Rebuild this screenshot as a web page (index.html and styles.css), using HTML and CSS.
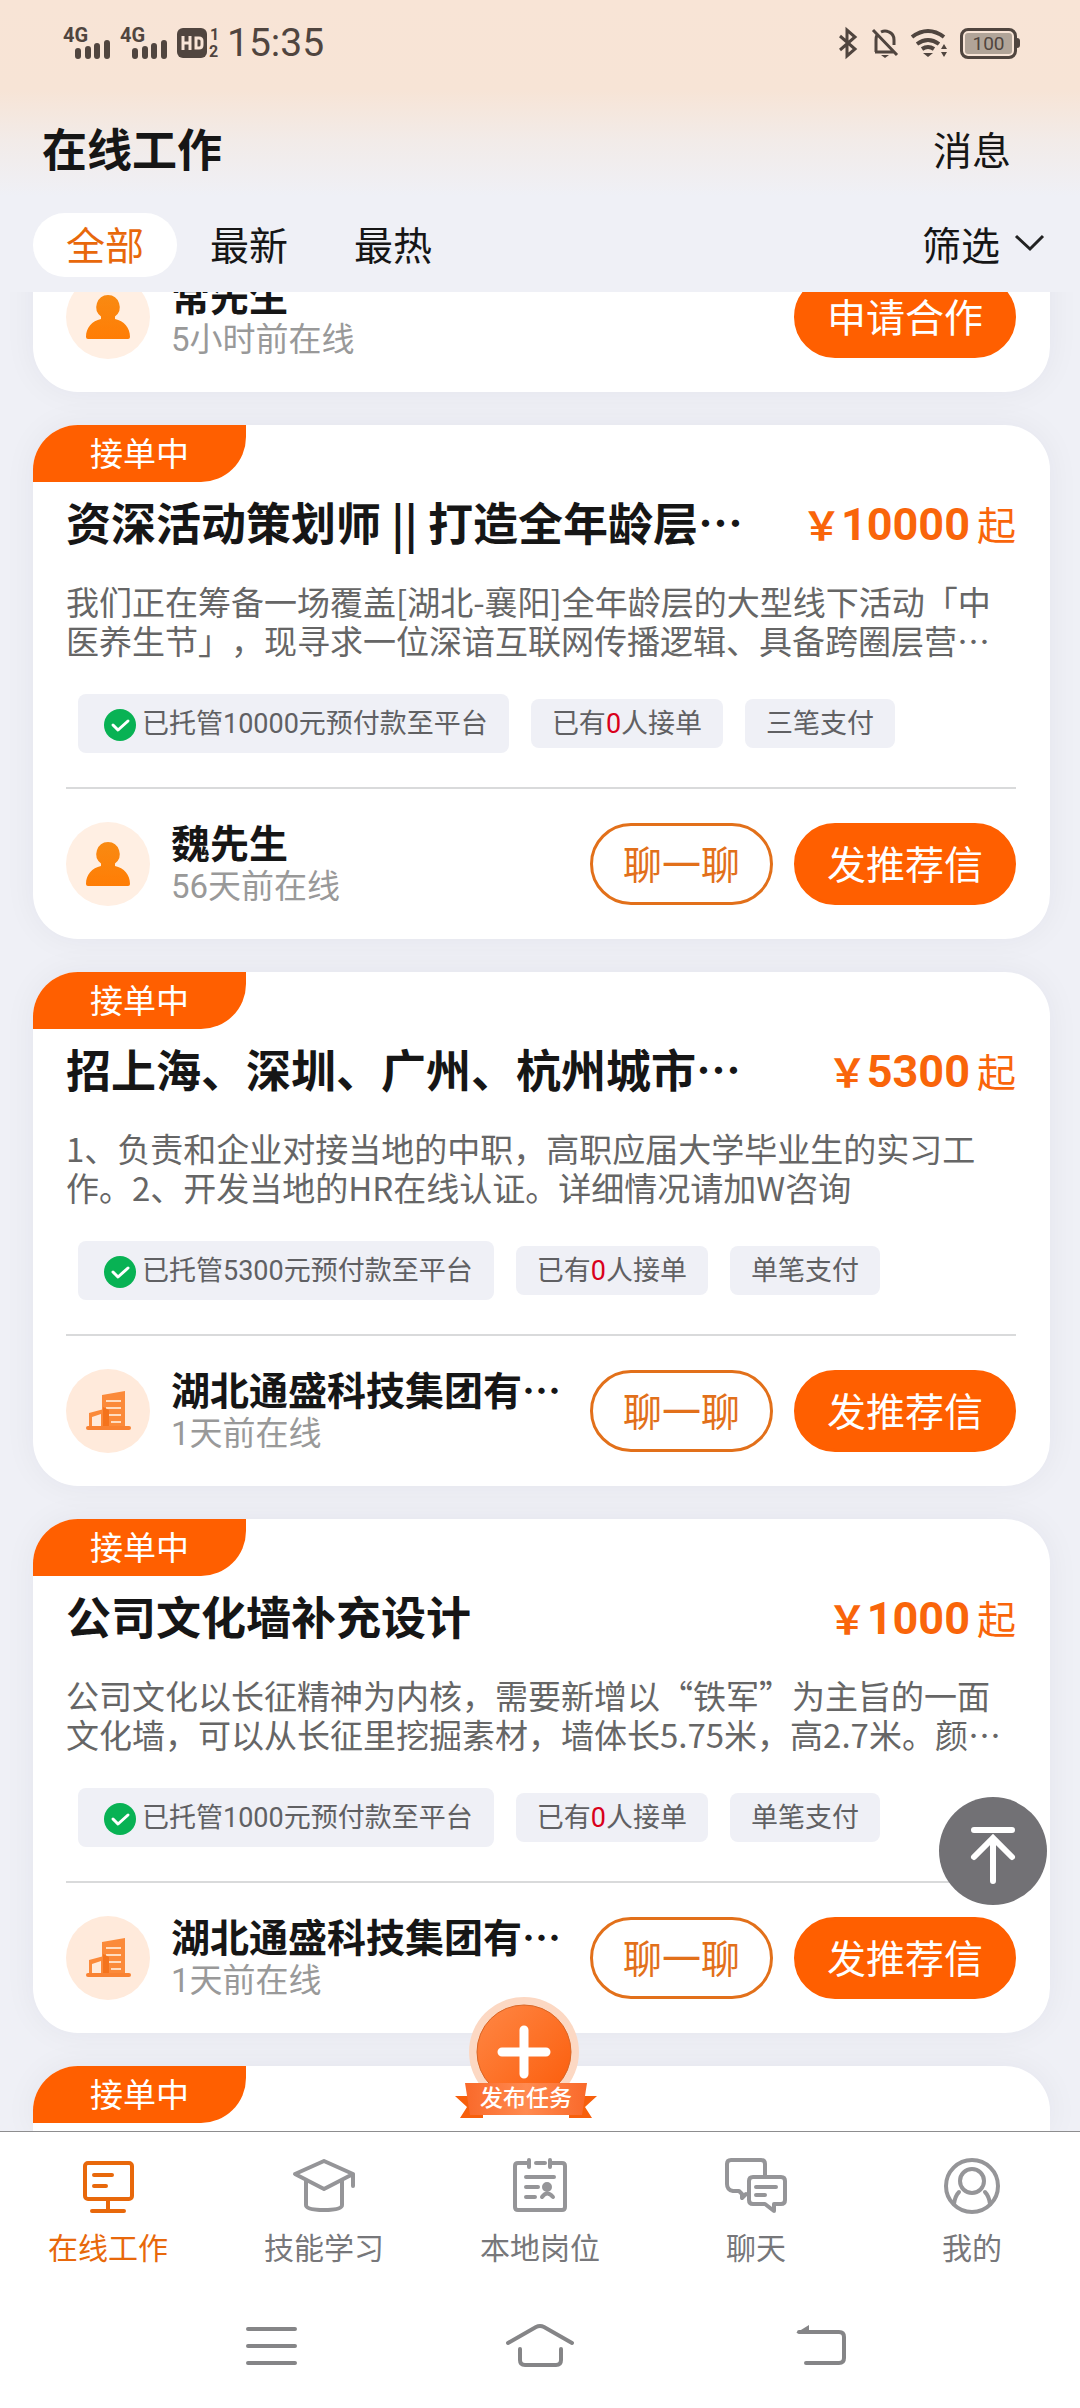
FILE: index.html
```html
<!DOCTYPE html>
<html lang="zh-CN">
<head>
<meta charset="utf-8">
<meta name="viewport" content="width=device-width, initial-scale=1">
<title>在线工作</title>
<link rel="stylesheet" href="styles.css">
</head>
<body>
<svg class="sprite" aria-hidden="true">
  <defs>
    <linearGradient id="person-fill" x1="0" y1="0" x2="0" y2="1">
      <stop offset="0" stop-color="#f98a12"/>
      <stop offset="1" stop-color="#ff7d05"/>
    </linearGradient>
  </defs>
  <symbol id="person" viewBox="0 0 84 84">
    <circle cx="42" cy="42" r="42" fill="#ffefe3"/>
    <path d="M42 20a12 12 0 0 1 7 21.500v2.500c9 2 15 8.500 15 18q0 2-2 2H22q-2 0-2-2c0-9.500 6-16 15-18v-2.500A12 12 0 0 1 42 20z" fill="url(#person-fill)"/>
  </symbol>
  <symbol id="building" viewBox="0 0 84 84">
    <circle cx="42" cy="42" r="42" fill="#ffeadb"/>
    <path d="M36 26l23-4v38H36z" fill="#fb8a3a"/>
    <path d="M40 32h15M40 39h15M43 46h12M45 53h10" stroke="#ffdcc0" stroke-width="2"/>
    <path d="M23 44l15-4v20h-3V45l-9 3v12h-3z" fill="#fb8a3a"/>
    <path d="M37 38l6 3v19h-6z" fill="#f4731c"/>
    <path d="M22 59h41" stroke="#f98232" stroke-width="4" stroke-linecap="round"/>
  </symbol>
  <symbol id="check" viewBox="0 0 32 32">
    <circle cx="16" cy="16" r="16" fill="#08b254"/>
    <path d="M9 16l5 5 10-9" fill="none" stroke="#fff" stroke-width="3" stroke-linecap="round" stroke-linejoin="round"/>
  </symbol>
</svg>

<div class="app">
  <div class="top">
    <div class="status">
      <svg class="signal" viewBox="0 0 48 32" aria-hidden="true"><text x="0" y="15">4G</text><path d="M15 24v5M25 22v7M34 19v10M44 16v13"/></svg>
      <svg class="signal" viewBox="0 0 48 32" aria-hidden="true"><text x="0" y="15">4G</text><path d="M15 24v5M25 22v7M34 19v10M44 16v13"/></svg>
      <svg class="hd" viewBox="0 0 46 32" aria-hidden="true"><rect y="1" width="30" height="30" rx="6"/><path d="M6 9v14M13 9v14M6 16h7M19 11v10h3q3 0 3-3v-4q0-3-3-3z"/><text x="33" y="13">1</text><text x="32" y="30">2</text></svg>
      <time class="clock">15:35</time>
      <span class="spacer"></span>
      <svg class="bt" viewBox="0 0 20 30" aria-hidden="true"><path d="M2 8l15 13-8 7V2l8 7L2 22"/></svg>
      <svg class="mute" viewBox="0 0 28 30" aria-hidden="true"><path d="M2 2l24 25M4 24h19M5 24V12q0-3 1-5M10 4q4-2 8 0 5 2 5 8v5"/><path d="M10 27h8l-4 3z" class="solid"/></svg>
      <svg class="wifi" viewBox="0 0 40 30" aria-hidden="true"><path d="M2 9q16-12 32 0M7 16q11-8 22 0M12 21q6-4 12 0"/><path d="M13 25h10l-5 4zM31 21l3-5 3 5zM31 24l3 5 3-5z" class="solid"/></svg>
      <span class="battery">100</span>
      <span class="battery-tip"></span>
    </div>
    <header class="bar">
      <h1 class="page-title">在线工作</h1>
      <a class="messages" href="#messages">消息</a>
    </header>
    <div class="filters">
      <button class="tab tab-on" type="button">全部</button>
      <button class="tab" type="button">最新</button>
      <button class="tab" type="button">最热</button>
      <span class="spacer"></span>
      <button class="filter" type="button">筛选<svg class="chevron" viewBox="0 0 33 18" aria-hidden="true"><path d="M2 2l14 13L29 2"/></svg></button>
    </div>
  </div>

  <main class="list">
    <article class="card card-scrolled">
      <div class="owner">
        <svg class="avatar" aria-hidden="true"><use href="#person"/></svg>
        <div class="who"><span class="name">常先生</span><span class="seen">5小时前在线</span></div>
        <button class="btn btn-solid" type="button">申请合作</button>
      </div>
    </article>

    <article class="card">
      <span class="badge">接单中</span>
      <div class="head"><h2 class="title">资深活动策划师 || 打造全年龄层…</h2><p class="price"><span class="yen">&#65509;</span>10000<span class="from">起</span></p></div>
      <p class="desc">我们正在筹备一场覆盖[湖北-襄阳]全年龄层的大型线下活动「中医养生节」，现寻求一位深谙互联网传播逻辑、具备跨圈层营…</p>
      <div class="tags">
        <span class="tag tag-paid"><svg class="check" aria-hidden="true"><use href="#check"/></svg>已托管10000元预付款至平台</span>
        <span class="tag">已有<em>0</em>人接单</span>
        <span class="tag">三笔支付</span>
      </div>
      <div class="owner">
        <svg class="avatar" aria-hidden="true"><use href="#person"/></svg>
        <div class="who"><span class="name">魏先生</span><span class="seen">56天前在线</span></div>
        <button class="btn" type="button">聊一聊</button>
        <button class="btn btn-solid" type="button">发推荐信</button>
      </div>
    </article>

    <article class="card">
      <span class="badge">接单中</span>
      <div class="head"><h2 class="title">招上海、深圳、广州、杭州城市…</h2><p class="price"><span class="yen">&#65509;</span>5300<span class="from">起</span></p></div>
      <p class="desc">1、负责和企业对接当地的中职，高职应届大学毕业生的实习工作。2、开发当地的HR在线认证。详细情况请加W咨询</p>
      <div class="tags">
        <span class="tag tag-paid"><svg class="check" aria-hidden="true"><use href="#check"/></svg>已托管5300元预付款至平台</span>
        <span class="tag">已有<em>0</em>人接单</span>
        <span class="tag">单笔支付</span>
      </div>
      <div class="owner">
        <svg class="avatar" aria-hidden="true"><use href="#building"/></svg>
        <div class="who"><span class="name">湖北通盛科技集团有…</span><span class="seen">1天前在线</span></div>
        <button class="btn" type="button">聊一聊</button>
        <button class="btn btn-solid" type="button">发推荐信</button>
      </div>
    </article>

    <article class="card">
      <span class="badge">接单中</span>
      <div class="head"><h2 class="title">公司文化墙补充设计</h2><p class="price"><span class="yen">&#65509;</span>1000<span class="from">起</span></p></div>
      <p class="desc">公司文化以长征精神为内核，需要新增以“铁军”为主旨的一面文化墙，可以从长征里挖掘素材，墙体长5.75米，高2.7米。颜…</p>
      <div class="tags">
        <span class="tag tag-paid"><svg class="check" aria-hidden="true"><use href="#check"/></svg>已托管1000元预付款至平台</span>
        <span class="tag">已有<em>0</em>人接单</span>
        <span class="tag">单笔支付</span>
      </div>
      <div class="owner">
        <svg class="avatar" aria-hidden="true"><use href="#building"/></svg>
        <div class="who"><span class="name">湖北通盛科技集团有…</span><span class="seen">1天前在线</span></div>
        <button class="btn" type="button">聊一聊</button>
        <button class="btn btn-solid" type="button">发推荐信</button>
      </div>
    </article>

    <article class="card card-next">
      <span class="badge">接单中</span>
    </article>
  </main>

  <footer class="bottom">
    <button class="to-top" type="button" aria-label="返回顶部">
      <svg viewBox="0 0 108 108" aria-hidden="true"><path d="M35 33h38M54 84V42M35 60l19-19 19 19"/></svg>
    </button>
    <button class="publish" type="button">
      <svg viewBox="0 0 142 124" aria-hidden="true">
        <defs>
          <linearGradient id="disc" x1="0" y1="0" x2="1" y2="1"><stop offset="0" stop-color="#ff8745"/><stop offset="1" stop-color="#fb5c0a"/></linearGradient>
          <linearGradient id="band" x1="0" y1="0" x2="1" y2="0"><stop offset="0" stop-color="#f9692a"/><stop offset=".5" stop-color="#ff8a50"/><stop offset="1" stop-color="#f9692a"/></linearGradient>
        </defs>
        <circle cx="69" cy="56" r="55" fill="#fcd8c3"/>
        <circle cx="69" cy="56" r="47" fill="url(#disc)" stroke="#d96626"/>
        <path d="M69 34v44M47 56h44" stroke="#fff" stroke-width="9" stroke-linecap="round"/>
        <path d="M0 100h28v22H5l7-11zM142 100h-28v22h23l-7-11z" fill="#f75f0c"/>
        <path d="M10 87h122l-5 32H15z" fill="url(#band)"/>
      </svg>
      <span class="publish-label">发布任务</span>
    </button>
    <nav class="nav">
      <a class="nav-item nav-on" href="#work"><svg viewBox="0 0 64 56" aria-hidden="true"><g stroke-width="4"><rect x="9" y="5" width="47" height="36" rx="3"/><path d="M18 17h18M18 28h12M32 41v12M16 53h32"/></g></svg>在线工作</a>
      <a class="nav-item" href="#learn"><svg viewBox="0 0 64 56" aria-hidden="true"><path d="M32 3l29 13-29 15L3 16zM61 16v12M14 23v24q0 5 18 5t18-5V23"/></svg>技能学习</a>
      <a class="nav-item" href="#jobs"><svg viewBox="0 0 64 56" aria-hidden="true"><path d="M21 5H10q-3 0-3 3v41q0 3 3 3h44q3 0 3-3V8q0-3-3-3H42M28 5h9M21 2v7M42 2v7M18 19h28M18 29h12M18 39h9M34 39q5-7 11 0"/><circle cx="39" cy="29" r="3" fill="currentColor"/></svg>本地岗位</a>
      <a class="nav-item" href="#chat"><svg viewBox="0 0 64 56" aria-hidden="true"><path d="M22 36l-4 4v-4l-3-3h-6q-6-1-6-7V6q0-4 4-4h30q4 0 4 4v13M29 19h28q4 0 4 4v19q0 4-4 4h-7v7l-9-7h-12q-4 0-4-4V23q0-4 4-4zM32 29h20M32 37h9"/></svg>聊天</a>
      <a class="nav-item" href="#me"><svg viewBox="0 0 64 56" aria-hidden="true"><circle cx="32" cy="28" r="26"/><circle cx="32" cy="23" r="12"/><path d="M14 46q1-8 5-12M50 46q-1-8-5-12"/></svg>我的</a>
    </nav>
    <div class="system">
      <button type="button" aria-label="最近任务"><svg viewBox="0 0 80 48" aria-hidden="true"><path d="M17 6h47M17 23h47M17 40h47"/></svg></button>
      <button type="button" aria-label="主屏幕"><svg viewBox="0 0 80 48" aria-hidden="true"><path d="M8 20L36 4q4-2 8 0l28 16M20 26v11q0 5 5 5h31q5 0 5-5V26"/></svg></button>
      <button type="button" aria-label="返回"><svg viewBox="0 0 80 48" aria-hidden="true"><path d="M30 9h40q5 0 5 5v21q0 5-5 5H37"/><path d="M27 10l13-8v8z" class="solid"/></svg></button>
    </div>
  </footer>
</div>
</body>
</html>
```
FILE: styles.css
```css
* { box-sizing: border-box; }

body {
  margin: 0;
  background: #eff0f6;
  color: #161616;
  font-family: "Noto Sans CJK SC", "Liberation Sans", sans-serif;
  font-size: 39px;
  line-height: 44px;
  text-spacing-trim: space-all;
}

h1, h2, p { margin: 0; }

button {
  margin: 0;
  padding: 0;
  border: 0;
  background: none;
  color: inherit;
  font: inherit;
  cursor: pointer;
}

a { color: inherit; text-decoration: none; }
svg { display: block; flex: none; }
.sprite { position: absolute; width: 0; height: 0; }
.spacer { flex: 1; }

.app {
  position: relative;
  display: flex;
  flex-direction: column;
  height: 100vh;
}

/* Top area */
.top {
  flex: none;
  background: linear-gradient(#f8e4d6 0, #f7e4d6 90px, #f2ebe8 140px, #eff0f6 196px);
}

.status {
  display: flex;
  align-items: center;
  height: 86px;
  padding: 0 60px 0 63px;
  color: #50453f;
}

.status svg {
  overflow: visible;
  fill: none;
  stroke: currentColor;
  stroke-width: 3;
}

.status text {
  fill: currentColor;
  stroke: none;
  font-family: Roboto, sans-serif;
  font-weight: 700;
}

.status .solid { fill: currentColor; stroke: none; }
.signal { width: 48px; height: 32px; margin-right: 9px; font-size: 20px; }
.signal path { stroke-width: 6; stroke-linecap: round; }
.hd { width: 46px; height: 32px; margin-right: 4px; font-size: 16px; }
.hd rect { fill: currentColor; stroke: none; }
.hd path { stroke: #f8e4d6; }
.clock { font-family: Roboto, sans-serif; font-size: 39px; }
.bt { width: 20px; height: 30px; margin-right: 13px; }
.mute { width: 28px; height: 30px; margin-right: 11px; }
.wifi { width: 40px; height: 30px; margin-right: 10px; }
.wifi path { stroke-width: 4; }

.battery {
  width: 57px;
  height: 31px;
  border: 3px solid #50453f;
  border-radius: 8px;
  background: #b1a498;
  box-shadow: inset 0 0 0 2px #f8e4d6;
  font-family: Roboto, sans-serif;
  font-size: 19px;
  line-height: 26px;
  text-align: center;
}

.battery-tip {
  width: 3px;
  height: 10px;
  border-radius: 0 3px 3px 0;
  background: #50453f;
}

.bar {
  display: flex;
  align-items: center;
  justify-content: space-between;
  height: 127px;
  padding: 0 69px 4px 42px;
}

.page-title { font-size: 45px; font-weight: 700; line-height: 60px; }

.filters {
  display: flex;
  align-items: center;
  padding: 0 33px 15px;
}

.tab { height: 64px; padding: 0 33px 4px; border-radius: 32px; }
.tab-on { background: #fff; color: #e8680b; }
.filter { display: flex; align-items: center; gap: 14px; padding-bottom: 4px; }

.chevron {
  width: 33px;
  height: 18px;
  fill: none;
  stroke: #222;
  stroke-width: 3;
}

/* Job list */
.list {
  display: flex;
  flex: 1;
  flex-direction: column;
  gap: 33px;
  min-height: 0;
  padding: 0 30px 0 33px;
  overflow: hidden;
}

.card {
  flex: none;
  padding: 0 34px 33px 33px;
  border-radius: 45px;
  background: #fff;
  box-shadow: 0 0 33px rgba(30, 40, 60, .05);
}

.card-scrolled { margin-top: -77px; padding-top: 27px; }
.card-next { flex: 1 0 64px; padding-bottom: 0; border-radius: 45px 45px 0 0; }

.badge {
  display: block;
  width: 213px;
  margin-left: -33px;
  padding-bottom: 3px;
  border-radius: 45px 0 45px 0;
  background: #ff5f00;
  color: #fff;
  font-size: 33px;
  line-height: 54px;
  text-align: center;
}

.head {
  display: flex;
  justify-content: space-between;
  margin: 10px 0 30px;
}

.title {
  font-size: 45px;
  font-weight: 700;
  line-height: 60px;
  white-space: nowrap;
}

.price {
  display: flex;
  align-items: baseline;
  height: 60px;
  padding-top: 3px;
  color: #f9650a;
  font-family: Roboto, "Noto Sans CJK SC", sans-serif;
  font-size: 45px;
  font-weight: 700;
  line-height: 60px;
}

.yen, .from { font-family: "Noto Sans CJK SC", sans-serif; font-size: 39px; line-height: 44px; }
.from { margin-left: 7px; font-weight: 400; }

.desc { color: #666; font-size: 33px; line-height: 39px; }

.tags {
  display: flex;
  align-items: center;
  gap: 22px;
  padding: 34px 0 34px 12px;
  border-bottom: 2px solid #d9dadb;
}

.tag {
  padding: 2px 21px 0;
  border-radius: 8px;
  background: #eff0f6;
  color: #606063;
  font-family: Roboto, "Noto Sans CJK SC", sans-serif;
  font-size: 27px;
  line-height: 47px;
}

.tag em { color: #d9001b; font-style: normal; }

.tag-paid {
  display: flex;
  align-items: center;
  gap: 6px;
  padding-left: 26px;
  line-height: 57px;
}

.check { width: 32px; height: 32px; }

.owner {
  display: flex;
  align-items: center;
  gap: 21px;
  height: 84px;
  margin-top: 33px;
}

.avatar { width: 84px; height: 84px; }

.who {
  display: flex;
  flex: 1;
  flex-direction: column;
  min-width: 0;
}

.name { font-weight: 700; line-height: 46px; white-space: nowrap; }

.seen {
  color: #999;
  font-family: Roboto, "Noto Sans CJK SC", sans-serif;
  font-size: 33px;
  line-height: 46px;
}

.btn {
  height: 82px;
  padding: 0 30px 4px;
  border: 3px solid #e2701a;
  border-radius: 41px;
  color: #e2701a;
}

.btn-solid { border-color: #ff5f00; background: #ff5f00; color: #fff; }

/* Bottom area */
.bottom {
  position: relative;
  flex: none;
  border-top: 1px solid #8d8d8f;
  background: #fff;
}

.to-top {
  position: absolute;
  right: 33px;
  bottom: 503px;
  width: 108px;
  height: 108px;
  border-radius: 50%;
  background: #727175;
}

.to-top svg { fill: none; stroke: #fff; stroke-width: 6; stroke-linecap: round; }

.publish {
  position: absolute;
  bottom: 288px;
  left: calc(50% - 85px);
  width: 142px;
  height: 124px;
}

.publish-label {
  position: absolute;
  right: 0;
  bottom: 8px;
  left: 0;
  color: #fff;
  font-size: 23px;
  font-weight: 500;
  line-height: 32px;
}

.nav {
  display: grid;
  grid-template-columns: repeat(5, 1fr);
  padding: 26px 0 55px;
}

.nav-item {
  display: flex;
  flex-direction: column;
  align-items: center;
  gap: 10px;
  color: #77777a;
  font-size: 30px;
}

.nav-item svg {
  width: 64px;
  height: 56px;
  fill: none;
  stroke: currentColor;
  stroke-width: 4;
  stroke-linecap: round;
  stroke-linejoin: round;
}

.nav-item:not(.nav-on) svg { color: #959598; }
.nav-on { color: #e8680b; }

.system {
  display: grid;
  grid-template-columns: repeat(3, 1fr);
  justify-items: center;
  padding: 0 136px 37px;
}

.system svg {
  width: 80px;
  height: 48px;
  fill: none;
  stroke: #858587;
  stroke-width: 4;
  stroke-linecap: round;
}

.system .solid { fill: #858587; stroke: none; }
```
